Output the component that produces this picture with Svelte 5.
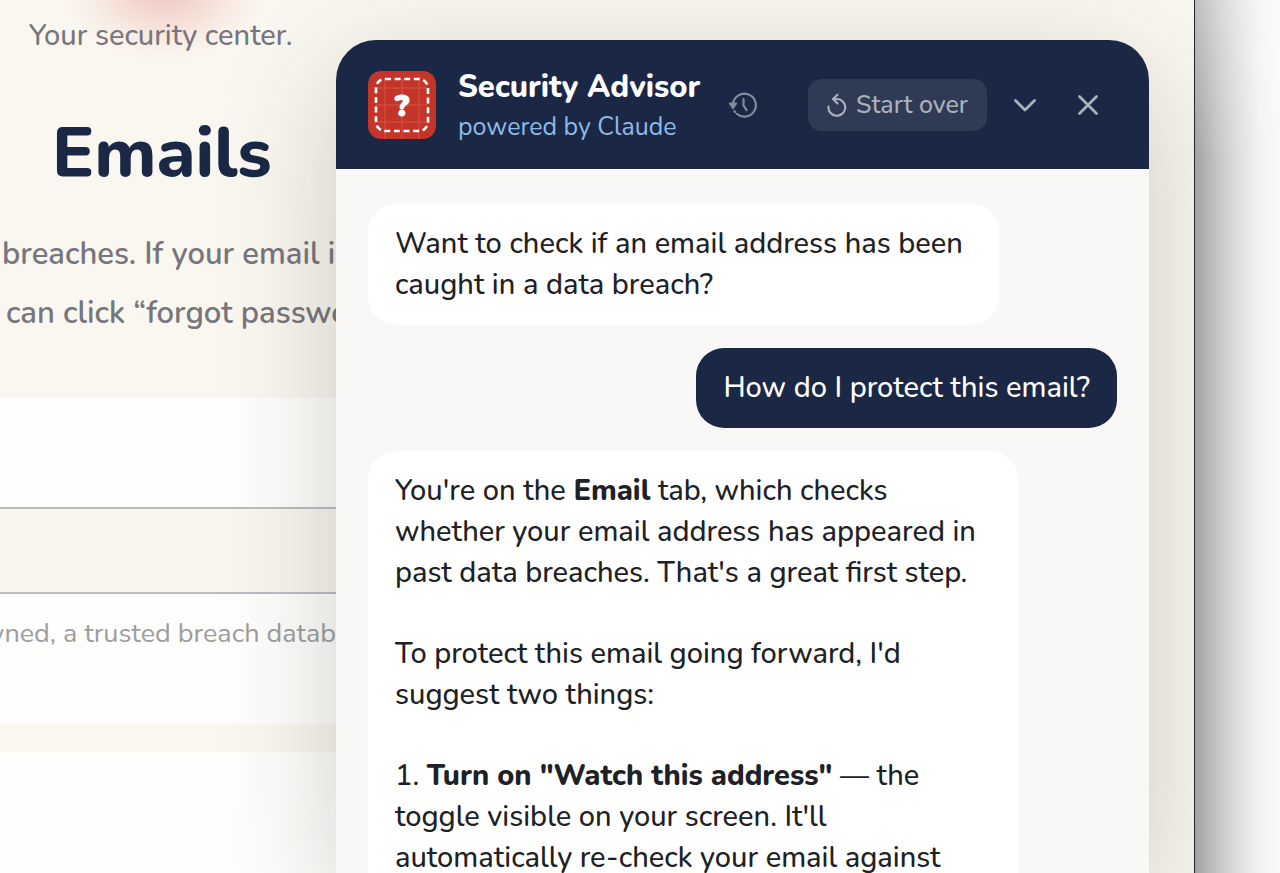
<script lang="ts">
  type Part = { text: string; bold?: boolean };
  type Message = { from: 'advisor' | 'user'; paragraphs: Part[][] };

  const messages: Message[] = [
    {
      from: 'advisor',
      paragraphs: [[{ text: 'Want to check if an email address has been\ncaught in a data breach?' }]],
    },
    { from: 'user', paragraphs: [[{ text: 'How do I protect this email?' }]] },
    {
      from: 'advisor',
      paragraphs: [
        [
          { text: "You're on the " },
          { text: 'Email', bold: true },
          { text: " tab, which checks\nwhether your email address has appeared in\npast data breaches. That's a great first step." },
        ],
        [{ text: "To protect this email going forward, I'd\nsuggest two things:" }],
        [
          { text: '1. ' },
          { text: 'Turn on "Watch this address"', bold: true },
          { text: " — the\ntoggle visible on your screen. It'll\nautomatically re-check your email against" },
        ],
      ],
    },
  ];

  let email = $state('');
</script>

<div class="desktop">
  <div class="app">
    <main class="page">
      <header class="intro">
        <p class="tagline">Your security center.</p>
        <h1>Emails</h1>
        <p class="lead">breaches. If your email i</p>
        <p class="lead second">can click “forgot passwo</p>
      </header>
      <section class="card">
        <input type="email" aria-label="Email address" bind:value={email} />
        <p class="note">wned, a trusted breach datab</p>
      </section>
      <section class="card next"></section>
    </main>

    <aside class="panel" aria-label="Security Advisor">
      <header class="bar">
        <svg class="logo" viewBox="0 0 68 68" aria-hidden="true">
          <rect width="68" height="68" rx="13" fill="#c43428" />
          <path d="M17 8v60M34 8v60M51 8v60M8 17h52M8 34h52M8 51h52" stroke="#d75b49" stroke-width="1.5" opacity=".6" />
          <rect x="8" y="8" width="52" height="52" rx="9" fill="none" stroke="#fff" stroke-width="2.6" stroke-dasharray="6 3.6" />
          <text x="34" y="45" text-anchor="middle" fill="#fff" stroke="#fff" stroke-width="1">?</text>
        </svg>
        <div class="title">
          <h2>Security Advisor</h2>
          <p>powered by Claude</p>
        </div>
        <button class="icon history" aria-label="History">
          <svg width="30" height="30" viewBox="0 0 30 30" fill="none" stroke="currentColor" stroke-width="2.2" stroke-linecap="round" stroke-linejoin="round">
            <path d="M5 13.500A11.500 11.500 0 1 1 9 24" />
            <path d="M7.200 22.200l-.8-1" />
            <path d="M2 13.500h6l-3 4.500z" fill="currentColor" />
            <path d="M15.500 9v6.500l3 4.500" />
          </svg>
        </button>
        <button class="restart">
          <svg width="20" height="24" viewBox="0 0 20 24" fill="none" stroke="currentColor" stroke-width="2.200" stroke-linecap="round" stroke-linejoin="round">
            <path d="M1.500 13.500A8.400 8.400 0 1 0 10 6H6.500" />
            <path d="M10.500 1.800L6 6l4.500 4.500" />
          </svg>
          Start over
        </button>
        <button class="icon collapse" aria-label="Collapse">
          <svg width="24" height="24" viewBox="0 0 24 24" fill="none" stroke="currentColor" stroke-width="2.800" stroke-linecap="round" stroke-linejoin="round">
            <path d="M2.500 7.500l9.500 9.500 9.500-9.500" />
          </svg>
        </button>
        <button class="icon" aria-label="Close">
          <svg width="24" height="24" viewBox="0 0 24 24" fill="none" stroke="currentColor" stroke-width="2.800" stroke-linecap="round">
            <path d="M3.500 3.500l17 17M20.500 3.500l-17 17" />
          </svg>
        </button>
      </header>

      <div class="messages">
        {#each messages as message}
          <div class="bubble {message.from}" class:long={message.paragraphs.length > 1}>
            {#each message.paragraphs as parts}
              <p>{#each parts as part}{#if part.bold}<strong>{part.text}</strong>{:else}{part.text}{/if}{/each}</p>
            {/each}
          </div>
        {/each}
      </div>
    </aside>
  </div>
</div>

<style>
  :global(body) {
    margin: 0;
    overflow: hidden;
  }

  .desktop {
    display: flex;
    height: 100vh;
    padding-right: 85px;
    box-sizing: border-box;
    overflow: hidden;
    background:
      linear-gradient(to bottom, rgba(255, 255, 255, 0.3), rgba(255, 255, 255, 0) 160px),
      linear-gradient(to left, #fafafa, #f3f3f3 20px, #dedede 42px, #c6c6c6 62px, #a2a2a2 85px);
    font-family: Nunito, Lato, sans-serif;
    font-weight: 500;
    color: #202124;
  }

  .app {
    position: relative;
    flex: 1;
    overflow: hidden;
    border-right: 1px solid #222524;
    background: #faf7f0;
  }

  p, h1, h2 {
    margin: 0;
    white-space: nowrap;
  }

  .page {
    display: flex;
    flex-direction: column;
    width: calc(100% - 858px);
    height: 100%;
  }

  .intro {
    height: 398px;
    color: #77767c;
    background: radial-gradient(ellipse 105px 74px at 164px -12px, #edc3bc, #f3d8d0 35%, #f8ece4 70%, #faf7f0);
  }

  .tagline {
    padding: 16px 0 0 29px;
    font-size: 29px;
    line-height: 40px;
  }

  h1 {
    padding: 47px 0 0 52px;
    font-size: 70px;
    font-weight: 800;
    line-height: 100px;
    color: #1b2845;
  }

  .lead {
    padding: 22px 0 0 2px;
    font-size: 31px;
    font-weight: 600;
    line-height: 59px;
  }

  .lead.second {
    padding: 0 0 0 6px;
  }

  .card {
    display: flex;
    flex-direction: column;
    padding: 109px 0 70px;
    background: #fefefc;
  }

  .card.next {
    flex: 1;
    margin-top: 28px;
    padding: 0;
  }

  input {
    height: 87px;
    box-sizing: border-box;
    padding: 0 24px;
    border: solid #bcbcc7;
    border-width: 2px 0;
    background: #f9f6ef;
    font: inherit;
    font-size: 29px;
    outline: 0;
  }

  .note {
    display: flex;
    justify-content: flex-end;
    padding-top: 20px;
    font-size: 27px;
    font-weight: 400;
    line-height: 40px;
    color: #9d9d9f;
  }

  .panel {
    position: absolute;
    top: 40px;
    right: 45px;
    bottom: 0;
    width: 813px;
    display: flex;
    flex-direction: column;
    border-radius: 40px 40px 0 0;
    background: #f9f8f6;
    box-shadow: 0 32px 120px rgba(40, 45, 35, 0.22);
  }

  .bar {
    display: flex;
    align-items: center;
    height: 129px;
    padding: 0 49px 0 32px;
    box-sizing: border-box;
    border-radius: 40px 40px 0 0;
    background: #1b2845;
  }

  .logo {
    width: 68px;
    height: 68px;
    flex: none;
    font-size: 30px;
    font-weight: 900;
  }

  .title {
    margin-left: 22px;
    padding-top: 4px;
    flex: 1;
  }

  h2 {
    font-size: 31px;
    font-weight: 800;
    line-height: 40px;
    color: #fff;
  }

  .title p {
    font-size: 25px;
    font-weight: 400;
    line-height: 40px;
    color: #8bbbe9;
  }

  button {
    display: flex;
    align-items: center;
    padding: 0;
    border: 0;
    background: none;
    font: inherit;
    color: #a9b1bd;
    cursor: pointer;
  }

  .history {
    margin-right: 50px;
    color: #828b9c;
  }

  .restart {
    gap: 9px;
    height: 52px;
    padding: 0 19px;
    border-radius: 14px;
    background: #2f3a55;
    font-size: 25px;
  }

  .collapse {
    margin: 0 39px 0 26px;
  }

  .messages {
    display: flex;
    flex-direction: column;
    gap: 23px;
    flex: 1;
    padding: 35px 32px 0;
    overflow: hidden;
  }

  .bubble {
    align-self: flex-start;
    flex: none;
    padding: 19px 36px 20px 27px;
    box-sizing: border-box;
    border-radius: 28px;
    background: #fff;
    font-size: 29px;
    line-height: 41px;
  }

  .bubble.long {
    min-width: 650px;
  }

  .bubble p {
    white-space: pre-line;
  }

  .bubble p + p {
    margin-top: 40px;
  }

  .bubble strong {
    font-weight: 800;
  }

  .bubble.user {
    align-self: flex-end;
    padding: 19px 27px 20px;
    background: #1b2845;
    color: #fff;
  }
</style>
